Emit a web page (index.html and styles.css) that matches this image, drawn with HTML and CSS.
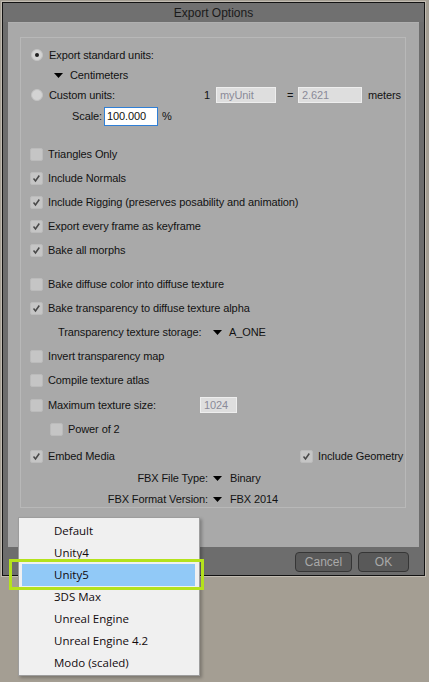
FILE: index.html
```html
<!DOCTYPE html>
<html>
<head>
<meta charset="utf-8">
<title>Export Options</title>
<link rel="stylesheet" href="styles.css">
</head>
<body>
<div class="window">
  <div class="titlebar">Export Options</div>
  <div class="panel">
    <div class="group">
      <div class="units">
        <div class="row r20">
          <span class="radio on"></span><span class="txt">Export standard units:</span>
        </div>
        <div class="row r20 indent-dd">
          <svg class="tri" width="9" height="5" viewBox="0 0 9 5"><polygon points="0,0 9,0 4.5,5"/></svg>
          <span class="dd-val">Centimeters</span>
        </div>
        <div class="row r20">
          <span class="radio"></span><span class="txt custom-label">Custom units:</span>
          <span class="one">1</span>
          <span class="field f-unit">myUnit</span>
          <span class="eq">=</span>
          <span class="field f-meters">2.621</span>
          <span class="meters">meters</span>
        </div>
        <div class="row r22 scale-row">
          <span class="scale-label">Scale:</span>
          <span class="scale-input">100.000</span>
          <span class="pct">%</span>
        </div>
      </div>

      <div class="row r24 gap15"><span class="cb"></span><span class="txt">Triangles Only</span></div>
      <div class="row r24"><span class="cb"><svg viewBox="0 0 13 13"><path d="M3 6.6 L5.3 9.4 L9.8 3"/></svg></span><span class="txt">Include Normals</span></div>
      <div class="row r24"><span class="cb"><svg viewBox="0 0 13 13"><path d="M3 6.6 L5.3 9.4 L9.8 3"/></svg></span><span class="txt">Include Rigging (preserves posability and animation)</span></div>
      <div class="row r24"><span class="cb"><svg viewBox="0 0 13 13"><path d="M3 6.6 L5.3 9.4 L9.8 3"/></svg></span><span class="txt">Export every frame as keyframe</span></div>
      <div class="row r24"><span class="cb"><svg viewBox="0 0 13 13"><path d="M3 6.6 L5.3 9.4 L9.8 3"/></svg></span><span class="txt">Bake all morphs</span></div>

      <div class="row r24 gap10"><span class="cb"></span><span class="txt">Bake diffuse color into diffuse texture</span></div>
      <div class="row r24"><span class="cb"><svg viewBox="0 0 13 13"><path d="M3 6.6 L5.3 9.4 L9.8 3"/></svg></span><span class="txt">Bake transparency to diffuse texture alpha</span></div>
      <div class="row r24">
        <span class="storage-label">Transparency texture storage:</span>
        <svg class="tri" width="9" height="5" viewBox="0 0 9 5"><polygon points="0,0 9,0 4.5,5"/></svg>
        <span class="dd-val">A_ONE</span>
      </div>
      <div class="row r24"><span class="cb"></span><span class="txt">Invert transparency map</span></div>
      <div class="row r24"><span class="cb"></span><span class="txt">Compile texture atlas</span></div>
      <div class="row r24 gap1">
        <span class="cb"></span><span class="txt max-label">Maximum texture size:</span>
        <span class="field f-size">1024</span>
      </div>
      <div class="row r24 sub"><span class="cb"></span><span class="txt">Power of 2</span></div>
      <div class="row r24 gap3">
        <span class="cb"><svg viewBox="0 0 13 13"><path d="M3 6.6 L5.3 9.4 L9.8 3"/></svg></span><span class="txt embed-label">Embed Media</span>
        <span class="cb"><svg viewBox="0 0 13 13"><path d="M3 6.6 L5.3 9.4 L9.8 3"/></svg></span><span class="txt">Include Geometry</span>
      </div>
      <div class="row r20">
        <span class="fbx-label">FBX File Type:</span>
        <svg class="tri" width="9" height="5" viewBox="0 0 9 5"><polygon points="0,0 9,0 4.5,5"/></svg>
        <span class="dd-val">Binary</span>
      </div>
      <div class="row r20 gap1">
        <span class="fbx-label">FBX Format Version:</span>
        <svg class="tri" width="9" height="5" viewBox="0 0 9 5"><polygon points="0,0 9,0 4.5,5"/></svg>
        <span class="dd-val">FBX 2014</span>
      </div>
    </div>
  </div>
  <div class="footer">
    <span class="btn btn-cancel">Cancel</span>
    <span class="btn btn-ok">OK</span>
  </div>
</div>

<div class="menu">
  <div class="item">Default</div>
  <div class="item">Unity4</div>
  <div class="item active">Unity5</div>
  <div class="item">3DS Max</div>
  <div class="item">Unreal Engine</div>
  <div class="item">Unreal Engine 4.2</div>
  <div class="item">Modo (scaled)</div>
</div>
<div class="focus-ring"></div>
</body>
</html>
```

FILE: styles.css
```css
html, body {
  margin: 0;
  padding: 0;
}

body {
  width: 429px;
  height: 682px;
  background: #a49e93;
  position: relative;
  overflow: hidden;
  font-family: "Liberation Sans", Arial, sans-serif;
  font-size: 11px;
  color: #121212;
}

/* dialog window */
.window {
  box-sizing: border-box;
  width: 423px;
  height: 574px;
  margin: 2px 0 0 2px;
  border: 1px solid #121212;
  box-shadow: 0 0 0 1px #c2bcb2;
  background: #6d6d6d;
  display: flex;
  flex-direction: column;
}

.titlebar {
  height: 19px;
  line-height: 20px;
  text-align: center;
  font-size: 12px;
  color: #1a1a1a;
  background: #707070;
  flex: none;
}

.panel {
  box-sizing: border-box;
  height: 525px;
  margin: 0 5px;
  background: #a9a9a9;
  border-top: 1px solid #b0b0b0;
  padding: 14px 13px 0 12px;
  flex: none;
}

.group {
  box-sizing: border-box;
  height: 471px;
  border: 1px solid #b8b8b8;
  padding-top: 7px;
  letter-spacing: -0.1px;
}

/* rows */
.row {
  display: flex;
  align-items: center;
  white-space: nowrap;
}
.r20 { height: 20px; }
.r22 { height: 22px; }
.r24 { height: 24px; }
.gap15 { margin-top: 15px; }
.gap10 { margin-top: 10px; }
.gap3 { margin-top: 3px; }
.gap1 { margin-top: 1px; }

/* radio buttons */
.radio {
  box-sizing: border-box;
  width: 12px;
  height: 12px;
  border-radius: 50%;
  background: #d3d3d3;
  border: 1px solid #c2c2c2;
  margin: 0 6px 0 10px;
  position: relative;
  flex: none;
}
.radio.on::after {
  content: "";
  position: absolute;
  left: 3px;
  top: 3px;
  width: 4px;
  height: 4px;
  border-radius: 50%;
  background: #1e1e1e;
}

/* checkboxes */
.cb {
  box-sizing: border-box;
  width: 13px;
  height: 13px;
  border-radius: 2px;
  background: #c5c5c5;
  border: 1px solid #bbbbbb;
  margin: 0 5px 0 9px;
  flex: none;
  display: flex;
}
.cb svg {
  width: 11px;
  height: 11px;
}
.cb path {
  fill: none;
  stroke: #484848;
  stroke-width: 1.8;
}

.sub .cb { margin-left: 29px; }

/* drop-down arrows */
.tri {
  fill: #000;
  flex: none;
}
.indent-dd .tri { margin-left: 33px; }
.dd-val { margin-left: 7px; }

/* custom units line */
.custom-label { width: 155px; }
.one { width: 6px; }
.field {
  box-sizing: border-box;
  height: 16px;
  line-height: 14px;
  background: #dedede;
  border: 1px solid #eeeeee;
  color: #8a8a98;
  padding-left: 3px;
  font-size: 11px;
}
.f-unit { width: 60px; margin-left: 6px; }
.eq { margin-left: 11px; width: 11px; }
.f-meters { width: 64px; }
.meters { margin-left: 6px; }

.scale-row .scale-label { margin-left: 51px; width: 32px; }
.scale-input {
  box-sizing: border-box;
  width: 54px;
  height: 19px;
  line-height: 17px;
  background: #ffffff;
  border: 1px solid #2f7fd6;
  padding-left: 2px;
  color: #111;
}
.pct { margin-left: 4px; }

.storage-label { margin-left: 37px; width: 155px; }

.max-label { width: 152px; }
.f-size { width: 37px; }

.embed-label { width: 243px; }

.fbx-label {
  width: 187px;
  text-align: right;
  margin-right: 5px;
}
.fbx-label + .tri + .dd-val { margin-left: 8px; }

/* bottom buttons */
.footer {
  flex: 1;
  display: flex;
  justify-content: flex-end;
  align-items: flex-start;
  padding: 5px 15px 0 0;
  gap: 6px;
}
.btn {
  box-sizing: border-box;
  height: 20px;
  line-height: 18px;
  text-align: center;
  background: #595959;
  border: 1px solid #363636;
  border-radius: 4px;
  color: #a9a9a9;
  font-size: 12px;
}
.btn-cancel { width: 57px; }
.btn-ok { width: 51px; }

/* popup menu */
.menu {
  position: absolute;
  left: 18px;
  top: 517px;
  box-sizing: border-box;
  width: 182px;
  height: 159px;
  padding: 2px 4px 0 3px;
  background: #f0f0f0;
  border: 1px solid #9d9d9d;
  box-shadow: 2px 2px 3px rgba(0, 0, 0, 0.25);
  font-family: "Open Sans", "Noto Sans", sans-serif;
  font-size: 11.5px;
  color: #120a0e;
}
.item {
  height: 22px;
  line-height: 22px;
  padding-left: 32px;
}
.item.active {
  background: #91c9f7;
}

.focus-ring {
  position: absolute;
  left: 9px;
  top: 559px;
  width: 189px;
  height: 25px;
  border: 3px solid #b4e21c;
}
```
